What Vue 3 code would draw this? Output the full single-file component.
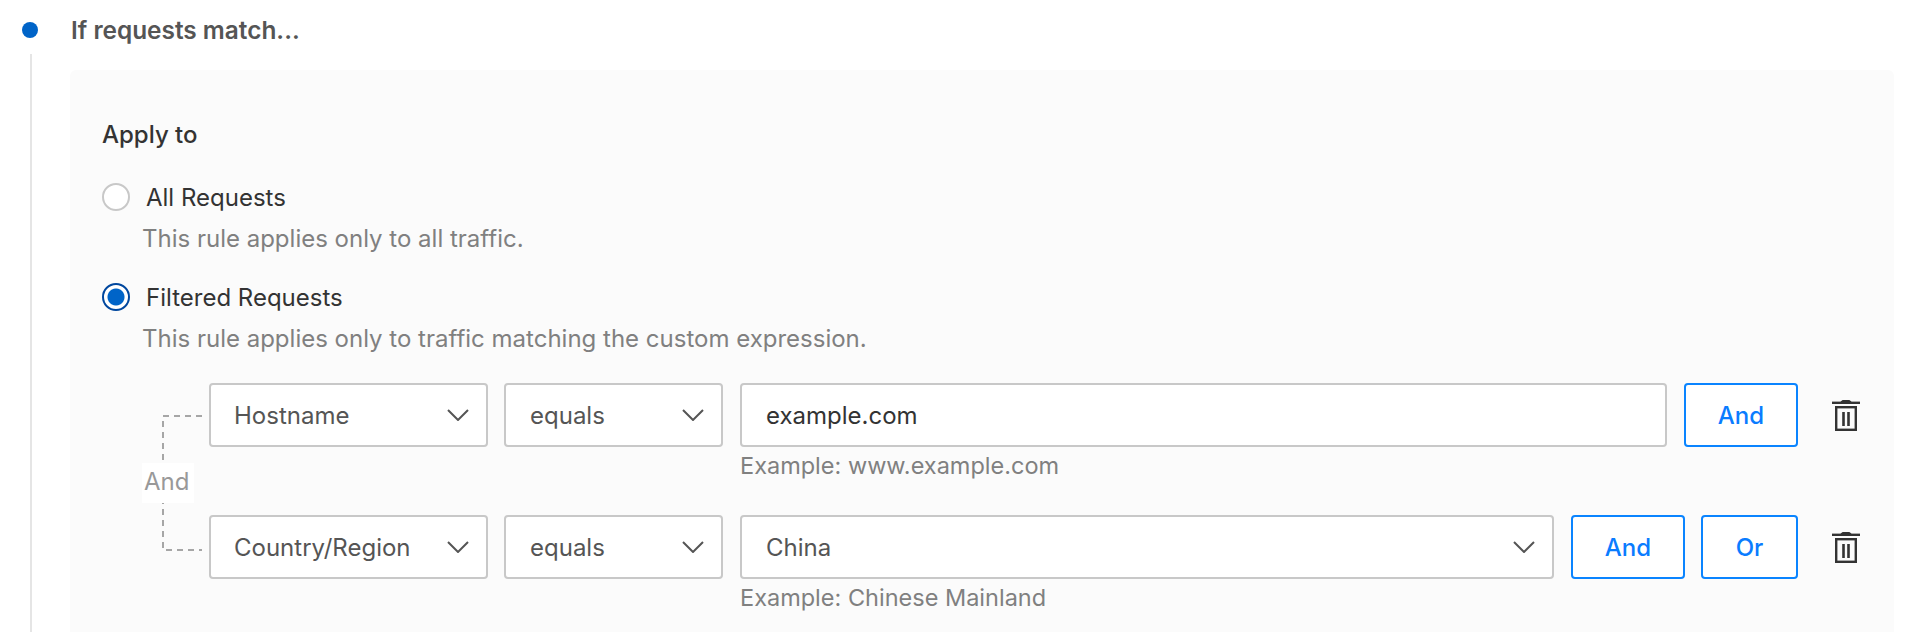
<script setup>
const options = [
  { label: 'All Requests', desc: 'This rule applies only to all traffic.', checked: false },
  { label: 'Filtered Requests', desc: 'This rule applies only to traffic matching the custom expression.', checked: true }
];

const rules = [
  { field: 'Hostname', op: 'equals', value: 'example.com', isSelect: false, hint: 'Example: www.example.com', actions: ['And'] },
  { field: 'Country/Region', op: 'equals', value: 'China', isSelect: true, hint: 'Example: Chinese Mainland', actions: ['And', 'Or'] }
];
</script>

<template>
  <div class="page">
    <div class="step-head">
      <span class="dot"></span>
      <span class="step-title">If requests match...</span>
    </div>
    <div class="step-body">
      <div class="panel">
        <div class="apply-title">Apply to</div>
        <div v-for="opt in options" :key="opt.label" class="option">
          <div class="radio-row">
            <span class="radio" :class="{ checked: opt.checked }"></span>
            <span class="radio-label">{{ opt.label }}</span>
          </div>
          <div class="desc">{{ opt.desc }}</div>
        </div>

        <div class="rules">
          <svg class="bracket" width="42" height="136" viewBox="0 0 42 136">
            <path d="M40 1H1V135H40" fill="none" stroke="#a6a6a6" stroke-width="2" stroke-dasharray="6 5" />
          </svg>
          <span class="logic">And</span>

          <div v-for="rule in rules" :key="rule.field" class="rule">
            <div class="control select field-select">
              <span>{{ rule.field }}</span>
              <svg class="chevron" width="22" height="12" viewBox="0 0 22 12"><path d="M1 1l10 10L21 1" fill="none" stroke="#555" stroke-width="2" /></svg>
            </div>
            <div class="control select op-select">
              <span>{{ rule.op }}</span>
              <svg class="chevron" width="22" height="12" viewBox="0 0 22 12"><path d="M1 1l10 10L21 1" fill="none" stroke="#555" stroke-width="2" /></svg>
            </div>
            <div class="value">
              <div class="control" :class="{ select: rule.isSelect }">
                <span>{{ rule.value }}</span>
                <svg v-if="rule.isSelect" class="chevron" width="22" height="12" viewBox="0 0 22 12"><path d="M1 1l10 10L21 1" fill="none" stroke="#555" stroke-width="2" /></svg>
              </div>
              <div class="hint">{{ rule.hint }}</div>
            </div>
            <button v-for="a in rule.actions" :key="a" class="btn" :class="a === 'Or' ? 'btn-or' : 'btn-and'">{{ a }}</button>
            <svg class="trash" width="28" height="32" viewBox="0 0 28 32">
              <path d="M9 3q0-1 2-1.500h6q2 .5 2 1.500z" fill="#333" stroke="#333" />
              <path d="M0 3.800h28" stroke="#333" stroke-width="2.400" />
              <rect x="4.200" y="8.200" width="19.600" height="22.600" fill="none" stroke="#333" stroke-width="2.400" />
              <path d="M11.500 13v14M16.500 13v14" stroke="#333" stroke-width="2.600" />
            </svg>
          </div>
        </div>
      </div>
    </div>
  </div>
</template>

<style>
html, body {
  margin: 0;
  background: #fff;
}
</style>

<style scoped>
.page {
  height: 632px;
  overflow: hidden;
  box-sizing: border-box;
  font-family: Inter, "Liberation Sans", sans-serif;
  font-size: 24px;
  line-height: 24px;
  color: #333;
}

.step-head {
  display: flex;
  align-items: center;
  height: 48px;
  padding: 6px 0 0 22px;
}

.dot {
  width: 16px;
  height: 16px;
  border-radius: 50%;
  background: #0064c8;
  margin-right: 33px;
}

.step-title {
  font-weight: 600;
  font-size: 24.4px;
  color: #555;
}

.step-body {
  margin-left: 30px;
  border-left: 2px solid #e5e5e5;
  padding: 16px 20px 0 38px;
  height: 562px;
}

.panel {
  background: #fbfbfb;
  border-radius: 6px;
  height: 700px;
  padding: 53px 34px 0 32px;
}

.apply-title {
  font-weight: 500;
  color: #333;
  margin-bottom: 36px;
}

.option {
  margin-bottom: 32px;
}

.radio-row {
  display: flex;
  align-items: center;
  height: 28px;
}

.radio {
  box-sizing: border-box;
  width: 28px;
  height: 28px;
  border-radius: 50%;
  border: 2px solid #c8c8c8;
  background: #fff;
  margin-right: 16px;
}

.radio.checked {
  border-color: #00479e;
  background: radial-gradient(circle, #0064c8 0 8px, #fff 9px);
}

.radio-label {
  padding-top: 2px;
}

.desc {
  margin: 16px 0 0 40px;
  color: #808080;
}

.rules {
  position: relative;
  padding-left: 107px;
}

.bracket {
  position: absolute;
  left: 60px;
  top: 32px;
}

.logic {
  position: absolute;
  left: 40px;
  top: 80px;
  width: 52px;
  height: 40px;
  line-height: 38px;
  padding-left: 2px;
  box-sizing: border-box;
  background: #fff;
  color: #999;
}

.rule {
  display: flex;
  align-items: flex-start;
  gap: 17px;
  margin-bottom: 37px;
}

.control {
  box-sizing: border-box;
  height: 64px;
  display: flex;
  align-items: center;
  justify-content: space-between;
  padding: 0 17px 0 24px;
  background: #fff;
  border: 2px solid #c8c8c8;
  border-radius: 4px;
}

.control span {
  padding-top: 2px;
}

.select {
  color: #555;
}

.field-select {
  width: 279px;
  padding-left: 23px;
  flex: none;
}

.op-select {
  width: 219px;
  margin-left: -1px;
  flex: none;
}

.value {
  flex: 1;
  min-width: 0;
}

.hint {
  margin-top: 7px;
  font-size: 23.5px;
  color: #808080;
}

.btn {
  box-sizing: border-box;
  height: 64px;
  flex: none;
  padding-top: 2px;
  background: #fff;
  border: 2px solid #0a84ff;
  border-radius: 4px;
  color: #0a7cff;
  font: inherit;
  font-weight: 500;
}

.btn-and {
  width: 114px;
}

.btn-or {
  width: 97px;
  margin-left: -1px;
}

.trash {
  flex: none;
  align-self: flex-start;
  margin: 16px 0 0 17px;
}
</style>
